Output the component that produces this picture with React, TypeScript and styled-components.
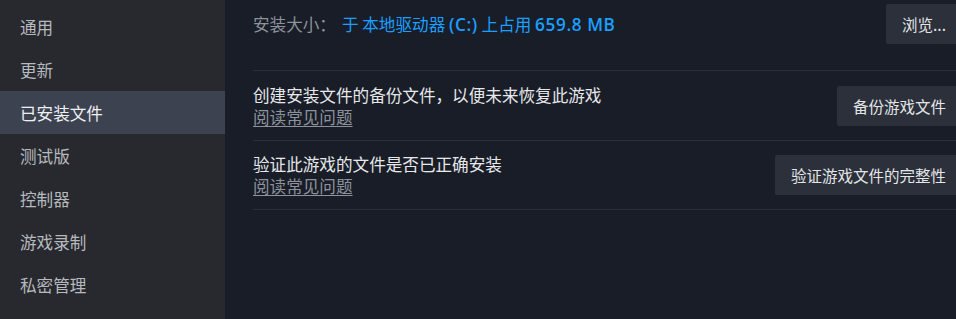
import React from "react";
import styled, { createGlobalStyle } from "styled-components";

const Global = createGlobalStyle`
  html, body { margin: 0; padding: 0; background: #1a1e28; overflow: hidden; }
  body { font-family: "Noto Sans CJK SC", "Noto Sans", "Liberation Sans", sans-serif; }
`;

const Layout = styled.div`
  display: flex;
  width: 956px;
  height: 319px;
  overflow: hidden;
`;

const Sidebar = styled.nav`
  width: 225px;
  flex: 0 0 225px;
  background: #28292f;
  padding-top: 5px;
  box-sizing: border-box;
  display: flex;
  flex-direction: column;
`;

const NavItem = styled.div<{ $active?: boolean }>`
  height: 43px;
  display: flex;
  align-items: center;
  padding-left: 20px;
  font-size: 16.6px;
  color: ${(p) => (p.$active ? "#eef0f2" : "#b6b9be")};
  background: ${(p) => (p.$active ? "#3d4250" : "transparent")};
`;

const Main = styled.main`
  flex: 1;
  background: #191d27;
  padding-left: 28px;
  display: flex;
  flex-direction: column;
`;

const Row = styled.div<{ $pad: string }>`
  display: flex;
  align-items: center;
  justify-content: space-between;
  padding: ${(p) => p.$pad};
  border-bottom: 1px solid #2a303b;
`;

const SizeLine = styled.div`
  font-size: 16.6px;
  display: flex;
  align-items: center;
  gap: 6px;
`;

const SizeLabel = styled.span`
  color: #8c929b;
`;

const SizeValue = styled.span`
  color: #1a9fff;
  b {
    font-weight: 600;
    font-size: 17.2px;
    letter-spacing: 0.6px;
    font-family: "Open Sans", "Noto Sans", sans-serif;
  }
`;

const TextBlock = styled.div`
  display: flex;
  flex-direction: column;
  line-height: 22px;
`;

const Title = styled.div`
  font-size: 16.6px;
  color: #e6e8ea;
`;

const Link = styled.a`
  font-size: 16.6px;
  color: #8c929b;
  text-decoration: underline;
  text-underline-offset: 2px;
  width: fit-content;
`;

const Button = styled.button`
  height: 40px;
  border: none;
  background: #2c303a;
  color: #e3e5e8;
  font-family: inherit;
  font-size: 15.5px;
  padding: 0 10px 0 16px;
  border-radius: 2px 0 0 2px;
  cursor: pointer;
  white-space: nowrap;
`;

const navItems = ["通用", "更新", "已安装文件", "测试版", "控制器", "游戏录制", "私密管理"];

export default function App() {
  return (
    <>
      <Global />
      <Layout>
        <Sidebar>
          {navItems.map((t) => (
            <NavItem key={t} $active={t === "已安装文件"}>
              {t}
            </NavItem>
          ))}
        </Sidebar>
        <Main>
          <Row $pad="4px 0 26px">
            <SizeLine>
              <SizeLabel>安装大小：</SizeLabel>
              <SizeValue>
                于 本地驱动器 <b>(C:)</b> 上占用 <b>659.8 MB</b>
              </SizeValue>
            </SizeLine>
            <Button>浏览...</Button>
          </Row>
          <Row $pad="13px 0 12px">
            <TextBlock>
              <Title>创建安装文件的备份文件，以便未来恢复此游戏</Title>
              <Link>阅读常见问题</Link>
            </TextBlock>
            <Button>备份游戏文件</Button>
          </Row>
          <Row $pad="12px 0 12px">
            <TextBlock>
              <Title>验证此游戏的文件是否已正确安装</Title>
              <Link>阅读常见问题</Link>
            </TextBlock>
            <Button>验证游戏文件的完整性</Button>
          </Row>
        </Main>
      </Layout>
    </>
  );
}
